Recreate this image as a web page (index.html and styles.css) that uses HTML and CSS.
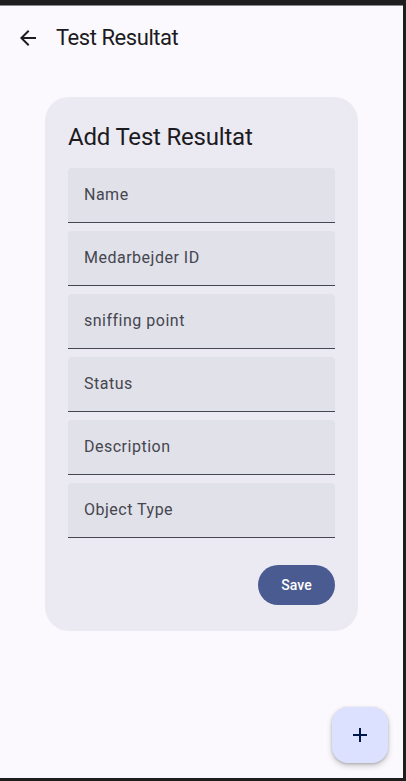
FILE: index.html
```html
<!DOCTYPE html>
<html lang="da">
<head>
<meta charset="utf-8">
<title>Test Resultat</title>
<link rel="stylesheet" href="styles.css">
</head>
<body>
<div class="screen">
  <header class="appbar">
    <button class="back" aria-label="Tilbage">
      <svg width="24" height="24" viewBox="0 0 24 24"><path d="M20 11H7.83l5.59-5.59L12 4l-8 8 8 8 1.41-1.41L7.83 13H20v-2z" fill="#1b1b21"/></svg>
    </button>
    <h1 class="title">Test Resultat</h1>
  </header>
  <main class="content">
    <section class="card">
      <h2 class="card-title">Add Test Resultat</h2>
      <div class="fields">
        <div class="field"><span class="label">Name</span></div>
        <div class="field"><span class="label">Medarbejder ID</span></div>
        <div class="field"><span class="label">sniffing point</span></div>
        <div class="field"><span class="label">Status</span></div>
        <div class="field"><span class="label">Description</span></div>
        <div class="field"><span class="label">Object Type</span></div>
      </div>
      <div class="actions">
        <button class="save">Save</button>
      </div>
    </section>
  </main>
  <button class="fab" aria-label="Tilføj">
    <svg width="24" height="24" viewBox="0 0 24 24"><path d="M19 13h-6v6h-2v-6H5v-2h6V5h2v6h6v2z" fill="#00174b"/></svg>
  </button>
</div>
</body>
</html>
```

FILE: styles.css
```css
* { box-sizing: border-box; }
html, body { margin: 0; padding: 0; }
body {
  background: #1e1e1e;
  font-family: Roboto, "Noto Sans", sans-serif;
  width: 406px;
  height: 781px;
  overflow: hidden;
}
.screen {
  position: relative;
  margin: 5px 3px 0 0;
  height: 773px;
  background: #fcf9fe;
  border-top: 1px solid #8a8a8e;
}
.appbar {
  height: 63px;
  display: flex;
  align-items: center;
}
.back {
  width: 48px;
  height: 48px;
  margin-left: 4px;
  border: 0;
  background: none;
  padding: 0;
  display: flex;
  align-items: center;
  justify-content: center;
}
.title {
  margin: 0 0 0 4px;
  font-size: 22px;
  font-weight: 400;
  color: #1b1b21;
  line-height: 28px;
  letter-spacing: -0.45px;
}
.content {
  padding: 28px 45px 0 45px;
}
.card {
  background: #ebe9f1;
  border-radius: 24px;
  padding: 24px 23px 26px 23px;
}
.card-title {
  margin: 0 0 15px 0;
  font-size: 24px;
  font-weight: 400;
  line-height: 32px;
  color: #1b1b21;
  letter-spacing: -0.2px;
}
.fields {
  display: flex;
  flex-direction: column;
  gap: 8px;
}
.field {
  height: 55px;
  background: #e1e1e9;
  border-radius: 4px 4px 0 0;
  border-bottom: 1px solid #45464f;
  display: flex;
  align-items: center;
  padding-left: 16px;
}
.label {
  font-size: 16px;
  letter-spacing: 0.5px;
  color: #45464f;
  line-height: 24px;
}
.actions {
  display: flex;
  justify-content: flex-end;
  margin-top: 27px;
}
.save {
  width: 77px;
  height: 40px;
  border: 0;
  border-radius: 20px;
  background: #4a5b91;
  color: #ffffff;
  font-family: Roboto, sans-serif;
  font-size: 14px;
  font-weight: 500;
  letter-spacing: 0.1px;
}
.fab {
  position: absolute;
  right: 15px;
  bottom: 15px;
  width: 56px;
  height: 56px;
  border: 0;
  border-radius: 16px;
  background: #dce1ff;
  display: flex;
  align-items: center;
  justify-content: center;
  box-shadow: 0 3px 6px rgba(0,0,0,0.18), 0 1px 3px rgba(0,0,0,0.2);
}
```
